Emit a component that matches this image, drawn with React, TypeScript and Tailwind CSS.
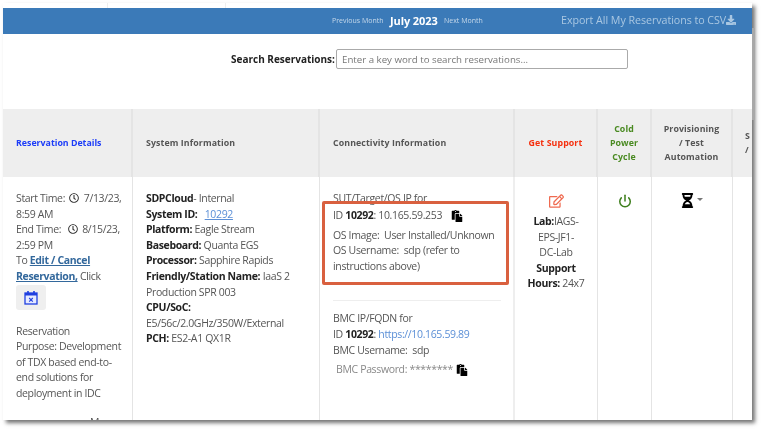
import React from 'react';
import { Power } from 'lucide-react';
import { FaDownload, FaPaste, FaHourglassHalf, FaRegClock, FaRegEdit } from 'react-icons/fa';

const headCell = 'flex items-center border-r-2 border-[#e4e4e4] text-[8.8px] font-bold leading-[14.2px] tracking-[0.1px]';
const strong = 'text-[#222]';

const Clock = () => <FaRegClock className="inline-block w-[10px] h-[10px] mx-[2px] text-[#333] align-[-1px]" />;

const CancelCalendar = () => (
  <svg width="14" height="15" viewBox="0 0 14 15" fill="none" className="text-[#1f3fe0]">
    <rect x="1" y="3" width="12" height="11" stroke="currentColor" strokeWidth="1.3" fill="#e6eaff" />
    <rect x="1" y="3" width="12" height="2.5" fill="currentColor" />
    <path d="M4 1v3M10 1v3" stroke="currentColor" strokeWidth="1.6" />
    <path d="M5.2 8l3.6 3.6M8.8 8l-3.6 3.6" stroke="currentColor" strokeWidth="1.1" />
  </svg>
);

export default function App() {
  return (
    <div className="relative w-[764px] h-[429px] bg-white overflow-hidden text-[10.5px] leading-[15.6px] tracking-[-0.35px] text-[#555] blur-[0.3px]" style={{ fontFamily: '"Open Sans", "Noto Sans", sans-serif' }}>
      <div className="relative ml-[3px] mt-[3px] w-[749px] h-[417px] bg-white overflow-hidden shadow-[3px_3px_4px_rgba(0,0,0,0.55)]">
        <div className="h-[5px] flex">
          <div className="w-[105px] border-r border-[#eee]" />
          <div className="w-[118px] border-r border-[#eee]" />
        </div>

        {/* month bar */}
        <div className="h-[26px] bg-[#3b7ab8] flex items-center text-white whitespace-nowrap">
          <div className="w-[329px]" />
          <span className="w-[51px] text-[7px] tracking-[0px] text-[#c5d8ea]">Previous Month</span>
          <span className="ml-[7px] w-[46px] text-[11px] font-bold tracking-[-0.1px]">July 2023</span>
          <span className="ml-[8px] w-[38px] text-[7px] tracking-[0px] text-[#c5d8ea]">Next Month</span>
          <div className="ml-[79px] flex items-center text-[10.7px] tracking-[-0.05px] text-[#a9c7e2]">
            Export All My Reservations to CSV
            <FaDownload className="w-[10px] h-[10px] mb-[3px]" />
          </div>
        </div>

        {/* search */}
        <div className="h-[75px] flex items-start">
          <label className="ml-[228px] mt-[18px] w-[100px] text-[10px] font-bold tracking-[0px] text-[#222] whitespace-nowrap">Search Reservations:</label>
          <input
            className="ml-[5px] mt-[15px] w-[292px] h-[20px] px-[5px] border border-[#aaa] rounded-[2px] text-[9.7px] tracking-[0px] placeholder:text-[#777]"
            placeholder="Enter a key word to search reservations..."
          />
        </div>

        {/* table head */}
        <div className="flex h-[68px] bg-[#eeeeee] text-[#555]">
          <div className={`${headCell} w-[130px] pl-[13px] tracking-[0px] text-[#1c3cf8]`}>Reservation Details</div>
          <div className={`${headCell} w-[187px] pl-[13px]`}>System Information</div>
          <div className={`${headCell} w-[195px] pl-[13px]`}>Connectivity Information</div>
          <div className={`${headCell} w-[83px] justify-center text-[#f5300f]`}>Get Support</div>
          <div className={`${headCell} w-[54px] justify-center text-center text-[#4a8a22]`}>Cold<br />Power<br />Cycle</div>
          <div className={`${headCell} w-[81px] justify-center text-center`}>Provisioning<br />/ Test<br />Automation</div>
          <div className="flex-1 flex items-center pl-[12px] text-[8.8px] font-bold leading-[14.2px] overflow-hidden whitespace-nowrap">S<br />/</div>
        </div>

        {/* table row */}
        <div className="flex h-[243px]">
          <div className="w-[130px] pl-[13px] pt-[14px] border-r border-[#e4e4e4] whitespace-nowrap">
            <p>Start Time: <Clock />&nbsp;7/13/23,<br />8:59 AM</p>
            <p>End Time: &nbsp;<Clock />&nbsp;8/15/23,<br />2:59 PM</p>
            <p>To <a className="font-bold underline text-[#33689c]">Edit / Cancel<br />Reservation,</a> Click</p>
            <div className="w-[30px] h-[25px] bg-[#efefef] rounded-[3px] flex items-center justify-center">
              <CancelCalendar />
            </div>
            <p className="mt-[14px]">Reservation<br />Purpose: Development<br />of TDX based end-to-<br />end solutions for<br />deployment in IDC</p>
            <p className="mt-[13px] ml-[74px]">M</p>
          </div>
          <div className="w-[187px] pl-[13px] pt-[14px] border-r border-[#e4e4e4] whitespace-nowrap">
            <p><b className={strong}>SDPCloud</b>- Internal</p>
            <p><b className={strong}>System ID:</b> &nbsp; <a className="underline text-[#5b8fd6]">10292</a></p>
            <p><b className={strong}>Platform:</b> Eagle Stream</p>
            <p><b className={strong}>Baseboard:</b> Quanta EGS</p>
            <p><b className={strong}>Processor:</b> Sapphire Rapids</p>
            <p><b className={strong}>Friendly/Station Name:</b> IaaS 2<br />Production SPR 003</p>
            <p><b className={strong}>CPU/SoC:</b></p>
            <p>E5/56c/2.0GHz/350W/External</p>
            <p><b className={strong}>PCH:</b> ES2-A1 QX1R</p>
          </div>
          <div className="w-[195px] pl-[13px] pr-[12px] pt-[14px] border-r-2 border-[#eee] whitespace-nowrap">
            <p>SUT/Target/OS IP for</p>
            <p className="flex items-center h-[19px]">ID&nbsp;<b className={strong}>10292</b>: 10.165.59.253<FaPaste className="ml-[9px] w-[12px] h-[12px] text-black" /></p>
            <p className="mt-[2px]">OS Image: &nbsp;User Installed/Unknown</p>
            <p>OS Username: &nbsp;sdp (refer to<br />instructions above)</p>
            <div className="mt-[26px] h-px bg-[#eee]" />
            <p className="mt-[10px]">BMC IP/FQDN for</p>
            <p>ID <b className={strong}>10292</b>: <a className="text-[#5b8fd6]">https://10.165.59.89</a></p>
            <p>BMC Username: &nbsp;sdp</p>
            <p className="mt-[4px] ml-[3px] flex items-center text-[#888]">BMC Password: ********<FaPaste className="ml-[3px] w-[12px] h-[12px] text-black" /></p>
          </div>
          <div className="w-[83px] pt-[17px] border-r border-[#e4e4e4] text-center flex flex-col items-center whitespace-nowrap">
            <FaRegEdit className="w-[15px] h-[14px] text-[#ef6a50] mb-[6px]" />
            <p><b className={strong}>Lab:</b>IAGS-<br />EPS-JF1-<br />DC-Lab</p>
            <p><b className={strong}>Support<br />Hours:</b> 24x7</p>
          </div>
          <div className="w-[54px] pt-[17px] border-r border-[#e4e4e4] flex justify-center">
            <Power className="w-[14px] h-[14px] text-[#3f7f1e]" strokeWidth={2.6} />
          </div>
          <div className="w-[81px] pt-[16px] border-r border-[#e4e4e4] flex justify-center">
            <FaHourglassHalf className="w-[13px] h-[15px] text-black" />
            <span className="ml-[3px] mt-[5px] h-0 w-0 border-x-[3px] border-t-[3px] border-x-transparent border-t-[#777]" />
          </div>
        </div>
      </div>

      {/* page scrollbar thumb */}
      <div className="absolute left-[752px] top-[28px] w-[3px] h-[92px] bg-[#a8a8a8]" />

      {/* callout */}
      <div className="absolute left-[322px] top-[201px] w-[187px] h-[84px] border-[3px] border-[#d9603f] rounded-[2px]" />
    </div>
  );
}
